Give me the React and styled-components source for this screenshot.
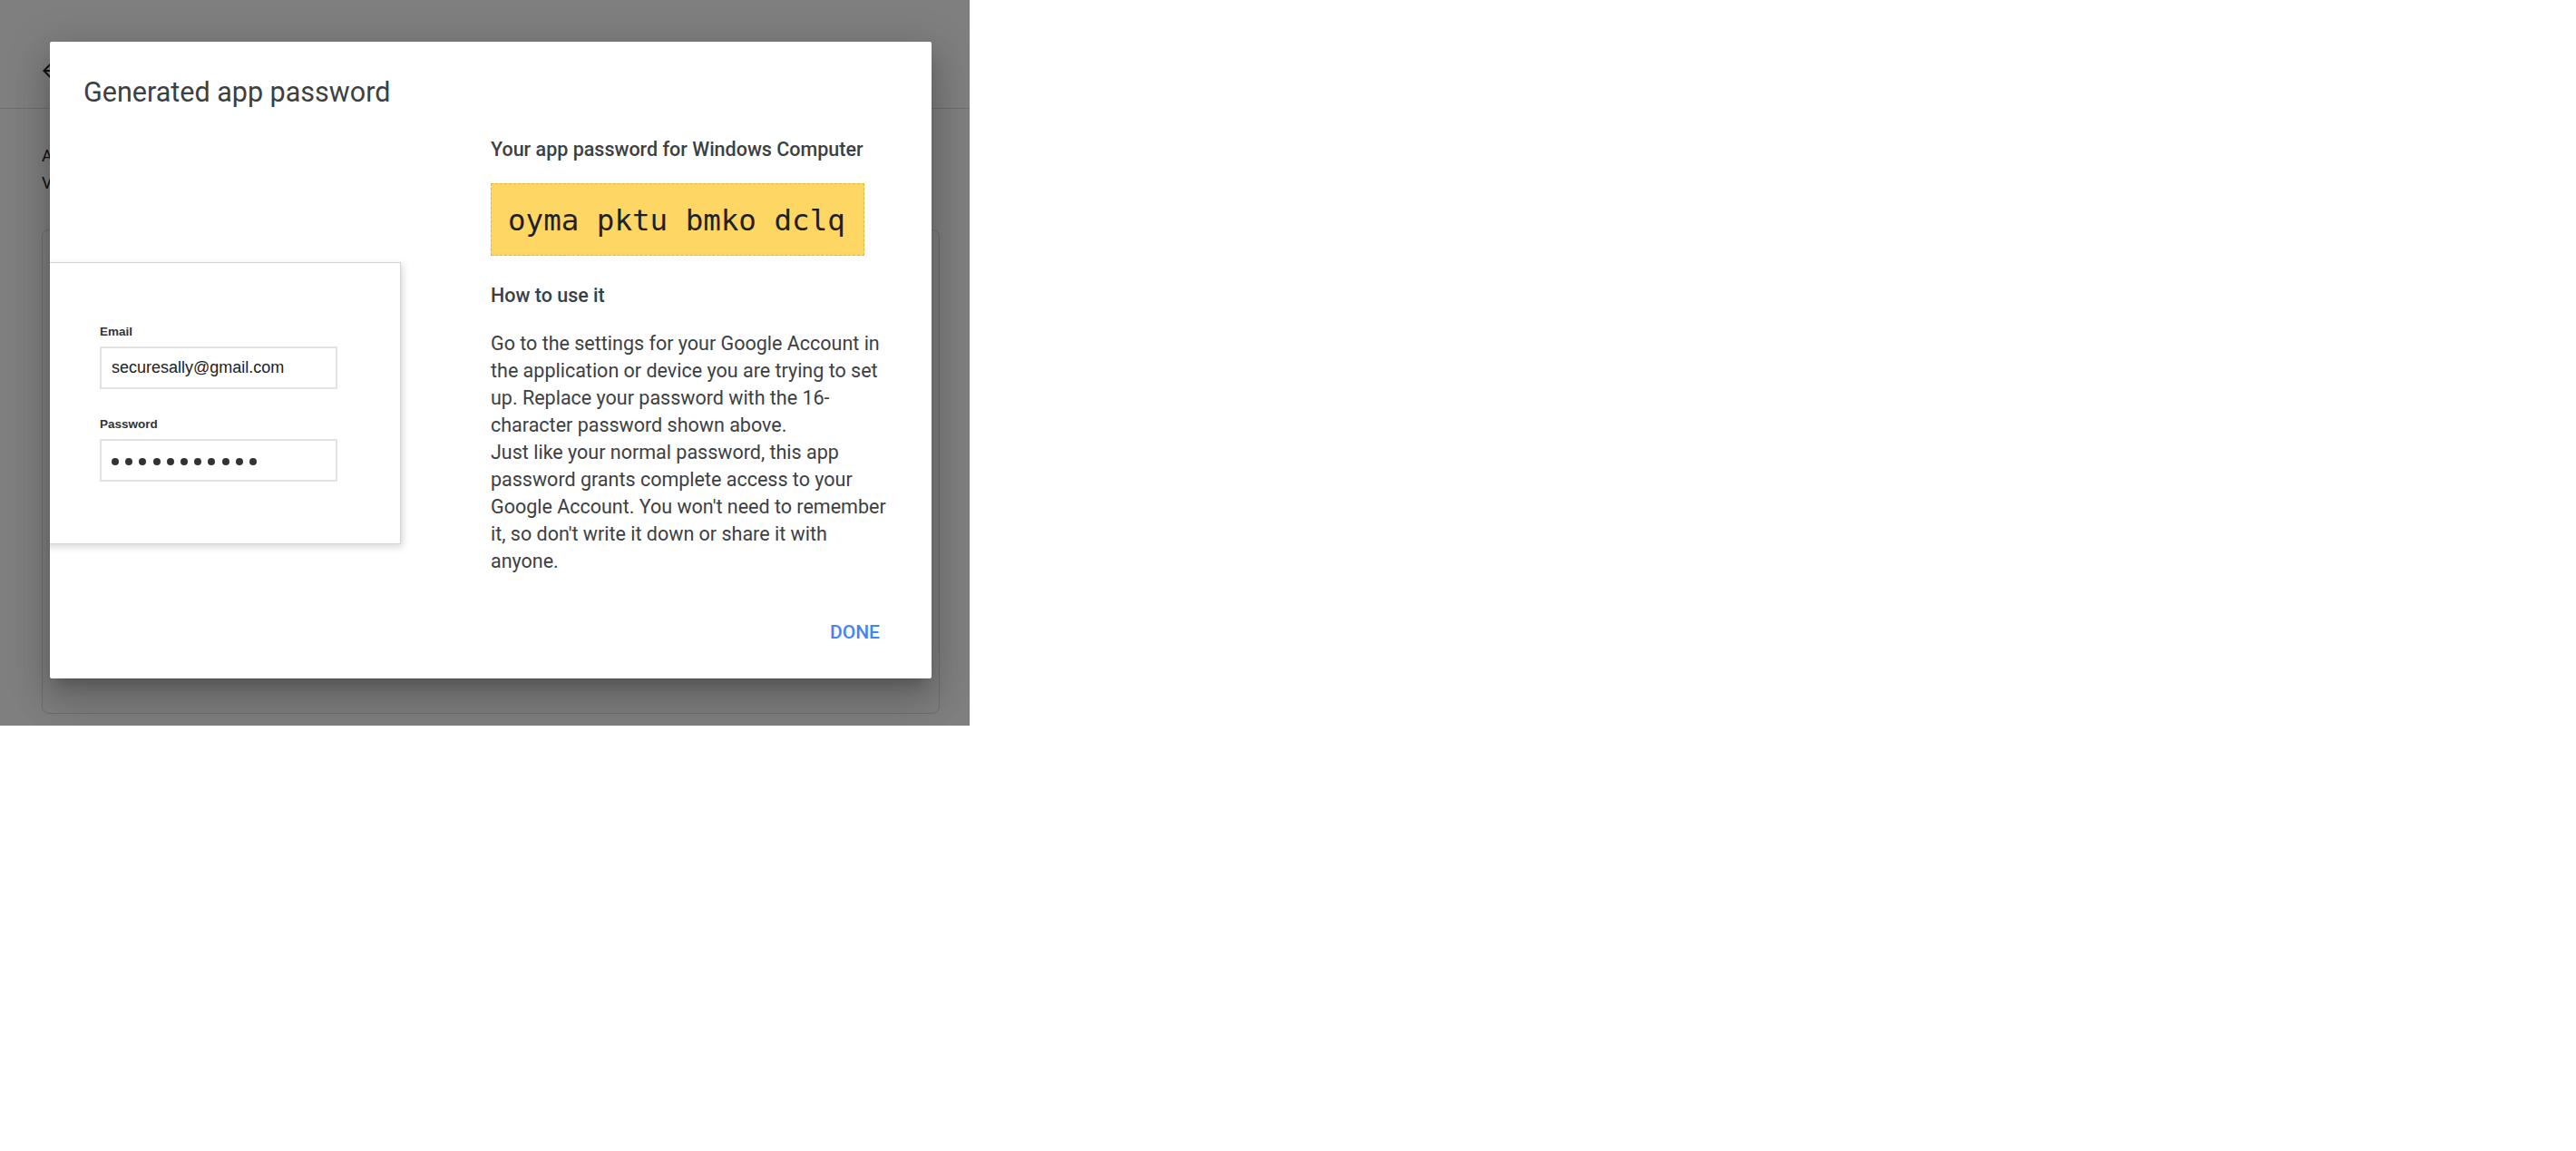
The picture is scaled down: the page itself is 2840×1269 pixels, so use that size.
import styled, { createGlobalStyle } from "styled-components";

const GlobalStyle = createGlobalStyle`
  html, body {
    margin: 0;
    padding: 0;
    background: #fff;
  }
  * {
    box-sizing: border-box;
  }
`;

const Stage = styled.div`
  position: relative;
  width: 1069px;
  height: 800px;
  overflow: hidden;
  background: #fff;
  font-family: Roboto, "Noto Sans", sans-serif;
  color: #3c4043;
`;

/* page that sits under the modal */
const PageHeader = styled.header`
  height: 120px;
  padding: 66px 0 0 43px;
  border-bottom: 1px solid #dadce0;
  color: #202124;
`;

const PageBody = styled.main`
  padding: 37px 33px 0 46px;
`;

const Intro = styled.p`
  margin: 0;
  font-size: 18px;
  line-height: 30px;
  color: #202124;
  white-space: nowrap;
`;

const PageCard = styled.section`
  margin-top: 36px;
  height: 534px;
  border: 1px solid #dadce0;
  border-radius: 8px;
`;

const Overlay = styled.div`
  position: absolute;
  inset: 0;
  background: rgba(0, 0, 0, 0.5);
  padding: 46px 0 0 55px;
`;

const Dialog = styled.div`
  width: 972px;
  height: 702px;
  background: #fff;
  border-radius: 2px;
  overflow: hidden;
  padding-top: 38px;
  box-shadow: 0 24px 38px 3px rgba(0, 0, 0, 0.14),
    0 9px 46px 8px rgba(0, 0, 0, 0.12), 0 11px 15px -7px rgba(0, 0, 0, 0.2);
`;

const Title = styled.h2`
  margin: 0;
  padding-left: 37px;
  font-size: 30.5px;
  line-height: 36px;
  font-weight: 400;
  color: #3c4043;
`;

const Body = styled.div`
  display: grid;
  grid-template-columns: 486px 446px;
  margin-top: 30px;
`;

const Illustration = styled.div`
  margin: 139px 0 0 -20px;
  width: 407px;
  height: 311px;
  background: #fff;
  border: 1px solid #d3d3d3;
  box-shadow: 2px 3px 8px rgba(0, 0, 0, 0.16);
  padding: 68px 0 0 74px;
  font-family: "Liberation Sans", Arial, sans-serif;
`;

const FieldLabel = styled.div`
  font-size: 13.5px;
  line-height: 16px;
  font-weight: 700;
  color: #333;
  margin-top: ${(p) => (p.$first ? "0" : "31px")};
  margin-bottom: 8px;
`;

const FakeInput = styled.div`
  width: 262px;
  height: 47px;
  border: 2px solid #e2e2e2;
  display: flex;
  align-items: center;
  padding-left: 11px;
  font-size: 18px;
  color: #222;
`;

const DotRow = styled.div`
  display: flex;
  gap: 7.2px;
  padding-top: 3px;
`;

const Dot = styled.span`
  width: 8px;
  height: 8px;
  border-radius: 50%;
  background: #333;
`;

const Info = styled.div`
  display: flex;
  flex-direction: column;
  align-items: flex-start;
`;

const Heading = styled.h3`
  margin: ${(p) => p.$mt || "0"} 0 0;
  font-size: 21.5px;
  line-height: 30px;
  font-weight: 500;
  color: #3c4043;
`;

const PasswordBox = styled.div`
  margin-top: 22px;
  height: 80px;
  display: flex;
  align-items: center;
  padding: 2px 20px 0 18px;
  background: #fdd663;
  border: 1px dashed #e2b53f;
  font-family: "DejaVu Sans Mono", "Liberation Mono", monospace;
  font-size: 32.5px;
  color: #202124;
  white-space: pre;
`;

const Paragraph = styled.p`
  margin: 23px 0 0;
  font-size: 21.5px;
  line-height: 30px;
  color: #3c4043;
`;

const Footer = styled.div`
  display: flex;
  justify-content: flex-end;
  padding-right: 57px;
  margin-top: 48px;
`;

const TextButton = styled.button`
  border: 0;
  background: none;
  padding: 0;
  font-family: Roboto, sans-serif;
  font-size: 21px;
  line-height: 30px;
  font-weight: 500;
  color: #4285f4;
  cursor: pointer;
`;

const BackArrow = () => (
  <svg width="24" height="24" viewBox="0 0 24 24" fill="currentColor">
    <path d="M20 11H7.83l5.59-5.59L12 4l-8 8 8 8 1.41-1.41L7.83 13H20v-2z" />
  </svg>
);

export default function App() {
  return (
    <>
      <GlobalStyle />
      <Stage>
        <PageHeader>
          <BackArrow />
        </PageHeader>
        <PageBody>
          <Intro>App passwords let you sign in to your Google</Intro>
          <Intro>Verification. You'll only need it once.</Intro>
          <PageCard />
        </PageBody>

        <Overlay>
          <Dialog>
            <Title>Generated app password</Title>
            <Body>
              <div>
                <Illustration>
                  <FieldLabel $first>Email</FieldLabel>
                  <FakeInput>securesally@gmail.com</FakeInput>
                  <FieldLabel>Password</FieldLabel>
                  <FakeInput>
                    <DotRow>
                      {Array.from({ length: 11 }).map((_, i) => (
                        <Dot key={i} />
                      ))}
                    </DotRow>
                  </FakeInput>
                </Illustration>
              </div>
              <Info>
                <Heading>Your app password for Windows Computer</Heading>
                <PasswordBox>oyma pktu bmko dclq</PasswordBox>
                <Heading $mt="29px">How to use it</Heading>
                <Paragraph>
                  Go to the settings for your Google Account in the application
                  or device you are trying to set up. Replace your password with
                  the 16-character password shown above.
                  <br />
                  Just like your normal password, this app password grants
                  complete access to your Google Account. You won't need to
                  remember it, so don't write it down or share it with anyone.
                </Paragraph>
              </Info>
            </Body>
            <Footer>
              <TextButton>DONE</TextButton>
            </Footer>
          </Dialog>
        </Overlay>
      </Stage>
    </>
  );
}
